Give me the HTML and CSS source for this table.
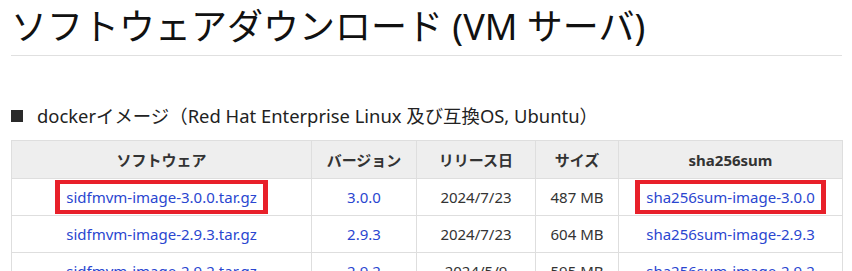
FILE: index.html
```html
<!DOCTYPE html>
<html lang="ja">
<head>
<meta charset="utf-8">
<link rel="stylesheet" href="styles.css">
</head>
<body>
<div class="page">
  <h1 class="title">ソフトウェアダウンロード (VM サーバ)</h1>
  <h2 class="section"><span class="bullet"></span>dockerイメージ（Red Hat Enterprise Linux 及び互換OS, Ubuntu）</h2>
  <table class="dl">
    <colgroup>
      <col class="c1"><col class="c2"><col class="c3"><col class="c4"><col class="c5">
    </colgroup>
    <thead>
      <tr><th>ソフトウェア</th><th>バージョン</th><th>リリース日</th><th>サイズ</th><th>sha256sum</th></tr>
    </thead>
    <tbody>
      <tr>
        <td><span class="hl"><a href="#">sidfmvm-image-3.0.0.tar.gz</a></span></td>
        <td><a href="#">3.0.0</a></td>
        <td>2024/7/23</td>
        <td>487 MB</td>
        <td><span class="hl"><a href="#">sha256sum-image-3.0.0</a></span></td>
      </tr>
      <tr>
        <td><a href="#">sidfmvm-image-2.9.3.tar.gz</a></td>
        <td><a href="#">2.9.3</a></td>
        <td>2024/7/23</td>
        <td>604 MB</td>
        <td><a href="#">sha256sum-image-2.9.3</a></td>
      </tr>
      <tr>
        <td><a href="#">sidfmvm-image-2.9.2.tar.gz</a></td>
        <td><a href="#">2.9.2</a></td>
        <td>2024/5/9</td>
        <td>595 MB</td>
        <td><a href="#">sha256sum-image-2.9.2</a></td>
      </tr>
    </tbody>
  </table>
</div>
</body>
</html>
```
FILE: styles.css
```css
html, body {
  margin: 0;
  padding: 0;
  background: #fff;
}
body {
  font-family: "Noto Sans", "Noto Sans CJK JP", sans-serif;
  color: #333;
}
.page {
  padding: 0 10px 0 11px;
}
.title {
  margin: 0;
  padding: 5px 0 7px;
  font-size: 36px;
  line-height: 43px;
  font-weight: 400;
  color: #111;
  border-bottom: 1px solid #e0e0e0;
  white-space: nowrap;
}
.section {
  margin: 47px 0 0;
  font-size: 18.4px;
  line-height: 26px;
  font-weight: 400;
  color: #222;
  display: flex;
  align-items: center;
  white-space: nowrap;
}
.bullet {
  width: 12px;
  height: 12px;
  background: #2a2a2a;
  margin-right: 14px;
  flex: none;
}
.dl {
  margin-top: 11px;
  width: 831px;
  border-collapse: collapse;
  table-layout: fixed;
  font-size: 15px;
}
.c1 { width: 300px; }
.c2 { width: 105px; }
.c3 { width: 119px; }
.c4 { width: 83px; }
.c5 { width: 224px; }
.dl th, .dl td {
  border: 1px solid #dedede;
  text-align: center;
  vertical-align: middle;
  padding: 0;
  white-space: nowrap;
  overflow: hidden;
}
.dl th {
  background: #eeeeee;
  height: 37px;
  font-weight: 700;
  color: #333;
}
.dl td {
  height: 36px;
  line-height: 20px;
}
.dl a {
  color: #2a46d0;
  text-decoration: none;
}
.hl {
  display: inline-block;
  border-style: solid;
  border-color: #e8202a;
  border-width: 4px 5px;
  padding: 3px 6px;
  line-height: 20px;
}
```
